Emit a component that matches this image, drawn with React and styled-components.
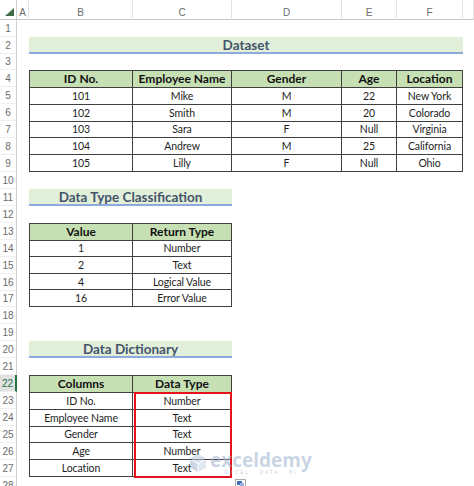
import styled, { createGlobalStyle } from 'styled-components';

const GlobalStyle = createGlobalStyle`
  html, body {
    margin: 0;
    padding: 0;
    background: #fff;
  }
  body {
    font-family: Lato, 'Liberation Sans', sans-serif;
    overflow: hidden;
  }
`;

// sheet row heights (rows 1..28), column header row is 20px
const ROW_HEIGHTS = [17, 17, 16, 17, 17, 17, 17, 17, 17, 17, 17, 17, 17, 17, 17, 17, 16, 17, 17, 17, 17, 17, 17, 17, 17, 17, 17, 17];
const COLUMNS = ['A', 'B', 'C', 'D', 'E', 'F', ''];

const Sheet = styled.div`
  position: relative;
  display: grid;
  grid-template-columns: 17px 12px 104px 99px 110px 55px 66px 1fr;
  grid-template-rows: 20px ${ROW_HEIGHTS.map((h) => h + 'px').join(' ')};
  width: 474px;
  height: 486px;
  overflow: hidden;
  background: #fff;
`;

const Corner = styled.div`
  grid-column: 1;
  grid-row: 1;
  box-sizing: border-box;
  border-right: 1px solid #cfcfcf;
  border-bottom: 1px solid #c6c6c6;
  display: flex;
  align-items: flex-end;
  justify-content: flex-end;
  padding: 0 2px 3px 0;
`;

const ColHead = styled.div`
  grid-row: 1;
  box-sizing: border-box;
  border-bottom: 1px solid #c6c6c6;
  border-right: 1px solid #e3e3e3;
  display: flex;
  align-items: center;
  justify-content: center;
  padding-top: 5px;
  font-family: 'Liberation Sans', sans-serif;
  font-size: 10px;
  color: #6b6b6b;
`;

const RowHead = styled.div`
  grid-column: 1;
  box-sizing: border-box;
  border-right: ${(p) => (p.active ? '2px solid #217346' : '1px solid #cfcfcf')};
  border-bottom: 1px solid #efefef;
  background: ${(p) => (p.active ? '#e1e1e1' : '#fff')};
  color: ${(p) => (p.active ? '#217346' : '#6b6b6b')};
  display: flex;
  align-items: center;
  justify-content: center;
  font-family: 'Liberation Sans', sans-serif;
  font-size: 10px;
`;

const Title = styled.div`
  grid-column: ${(p) => p.cols};
  grid-row: ${(p) => p.row};
  box-sizing: border-box;
  background: #e2efda;
  border-bottom: 2px solid #8eaadb;
  display: flex;
  align-items: center;
  justify-content: center;
  font-weight: 700;
  font-size: 13.5px;
  color: #44546a;
`;

const Table = styled.div`
  grid-column: ${(p) => p.cols};
  grid-row: ${(p) => p.rows};
  box-sizing: border-box;
  display: grid;
  grid-template-columns: ${(p) => p.widths};
  grid-auto-rows: 1fr;
  border-top: 1px solid #3f3f3f;
  border-left: 1px solid #3f3f3f;
`;

const Cell = styled.div`
  box-sizing: border-box;
  border-right: 1px solid #3f3f3f;
  border-bottom: 1px solid #3f3f3f;
  background: ${(p) => (p.head ? '#c6e0b4' : '#fff')};
  display: flex;
  align-items: center;
  justify-content: center;
  font-size: ${(p) => (p.head ? '12px' : '10.5px')};
  font-weight: ${(p) => (p.head ? 700 : 400)};
  color: ${(p) => (p.head ? '#111' : '#1e1e1e')};
  letter-spacing: ${(p) => (p.head ? '0' : '-0.1px')};
  white-space: nowrap;
`;

const Highlight = styled.div`
  grid-column: 4 / 5;
  grid-row: 24 / 29;
  box-sizing: border-box;
  margin: 0 0 -1px 1px;
  border: 2px solid #e3141c;
  z-index: 2;
`;

const Watermark = styled.div`
  position: absolute;
  left: 189px;
  top: 451px;
  display: flex;
  align-items: center;
  gap: 3px;
  opacity: 0.55;
  z-index: 3;
  pointer-events: none;
`;

const MarkText = styled.div`
  display: flex;
  flex-direction: column;
  align-items: center;
  line-height: 1;
  color: #9fb3cf;
  & b {
    font-family: 'Open Sans', sans-serif;
    font-size: 19px;
    font-weight: 700;
  }
  & small {
    font-family: 'Liberation Sans', sans-serif;
    font-size: 5px;
    letter-spacing: 1.8px;
    margin-top: 0;
  }
`;

const PasteIcon = styled.div`
  position: absolute;
  left: 235px;
  top: 479px;
  width: 11px;
  height: 9px;
  box-sizing: border-box;
  border: 1px solid #a9a9a9;
  background: #fff;
  display: flex;
  align-items: center;
  justify-content: center;
  z-index: 3;
`;

const dataset = [
  ['ID No.', 'Employee Name', 'Gender', 'Age', 'Location'],
  ['101', 'Mike', 'M', '22', 'New York'],
  ['102', 'Smith', 'M', '20', 'Colorado'],
  ['103', 'Sara', 'F', 'Null', 'Virginia'],
  ['104', 'Andrew', 'M', '25', 'California'],
  ['105', 'Lilly', 'F', 'Null', 'Ohio'],
];

const classification = [
  ['Value', 'Return Type'],
  ['1', 'Number'],
  ['2', 'Text'],
  ['4', 'Logical Value'],
  ['16', 'Error Value'],
];

const dictionary = [
  ['Columns', 'Data Type'],
  ['ID No.', 'Number'],
  ['Employee Name', 'Text'],
  ['Gender', 'Text'],
  ['Age', 'Number'],
  ['Location', 'Text'],
];

const DataTable = ({ rows, cols, gridRows, widths }) => (
  <Table cols={cols} rows={gridRows} widths={widths}>
    {rows.map((r, i) =>
      r.map((v, j) => (
        <Cell key={i + '-' + j} head={i === 0}>
          {v}
        </Cell>
      ))
    )}
  </Table>
);

const App = () => {
  return (
    <>
      <GlobalStyle />
      <Sheet>
        <Corner>
          <svg width="9" height="8" viewBox="0 0 9 8">
            <polygon points="9,0 9,8 0,8" fill="#3f6b47" />
          </svg>
        </Corner>
        {COLUMNS.map((c, i) => (
          <ColHead key={i} style={{ gridColumn: i + 2 }}>
            {c}
          </ColHead>
        ))}
        {ROW_HEIGHTS.map((h, i) => (
          <RowHead key={i} active={i + 1 === 22} style={{ gridRow: i + 2 }}>
            {i + 1}
          </RowHead>
        ))}

        <Title cols="3 / 8" row={3}>Dataset</Title>
        <DataTable
          rows={dataset}
          cols="3 / 8"
          gridRows="5 / 11"
          widths="103px 99px 110px 55px 66px"
        />

        <Title cols="3 / 5" row={12}>Data Type Classification</Title>
        <DataTable rows={classification} cols="3 / 5" gridRows="14 / 19" widths="103px 99px" />

        <Title cols="3 / 5" row={21}>Data Dictionary</Title>
        <DataTable rows={dictionary} cols="3 / 5" gridRows="23 / 29" widths="103px 99px" />
        <Highlight />

        <Watermark>
          <svg width="18" height="20" viewBox="0 0 18 20">
            <polygon points="9,1 17,5.5 9,10 1,5.5" fill="#b9c9de" />
            <polygon points="1,6.5 8.5,11 8.5,19 1,14.5" fill="#a6b9d3" />
            <polygon points="17,6.5 9.5,11 9.5,19 17,14.5" fill="#c7d4e6" />
          </svg>
          <MarkText>
            <b>exceldemy</b>
            <small>EXCEL · DATA · BI</small>
          </MarkText>
        </Watermark>
        <PasteIcon>
          <svg width="7" height="5" viewBox="0 0 7 5">
            <rect x="0" y="0" width="5" height="4" fill="#3d6fb6" />
            <rect x="3" y="2" width="4" height="3" fill="#9ab6dc" />
          </svg>
        </PasteIcon>
      </Sheet>
    </>
  );
};

export default App;
